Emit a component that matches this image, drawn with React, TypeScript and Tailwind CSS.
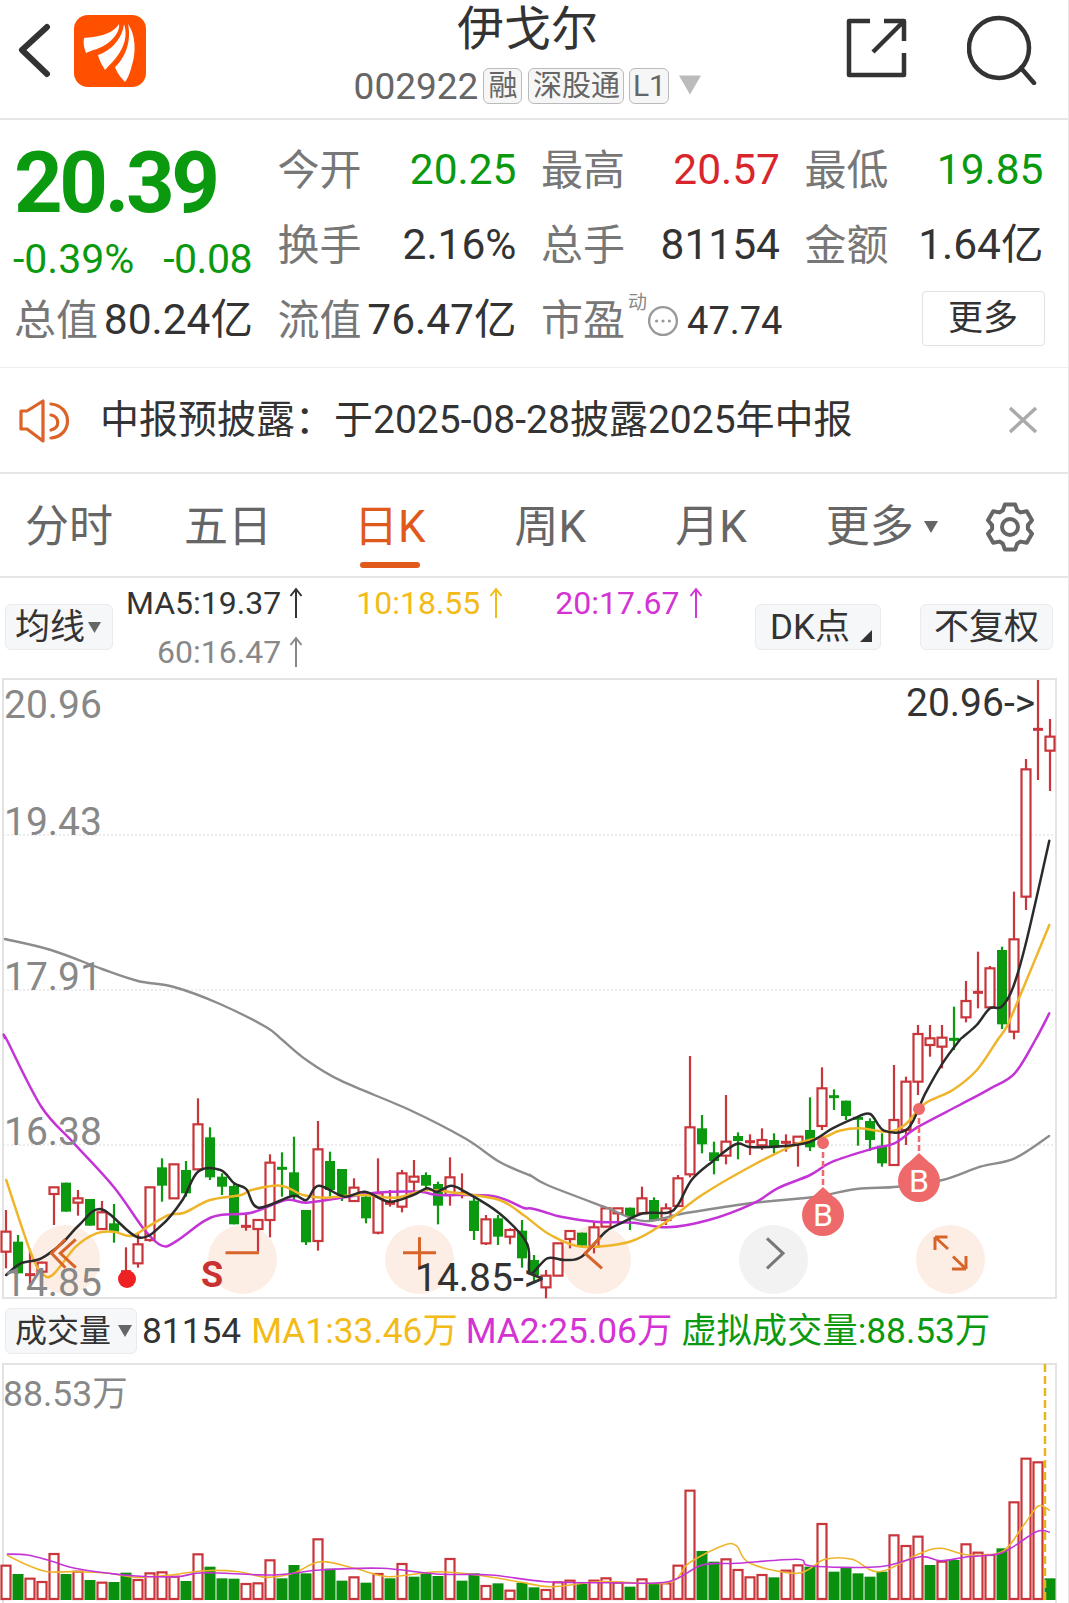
const RED = '#c9353a';
const GREEN = '#0a990f';

type Candle = [number, number, number, number, 'r' | 'g'];
type Pt = [number, number];

// candle values were read off crops of the chart, so each block has its own scale
const candlesA: Candle[] = [
  [510, 575, 635, 685, 'r'], [585, 605, 700, 700, 'g'], [630, 704, 704, 745, 'r'], [665, 668, 695, 700, 'r'],
  [442, 442, 462, 555, 'r'], [428, 428, 515, 515, 'g'], [450, 475, 488, 527, 'r'], [477, 477, 557, 557, 'g'],
  [483, 517, 567, 567, 'r'], [492, 550, 575, 608, 'g'], [622, 695, 695, 700, 'r'], [580, 613, 670, 683, 'r'],
  [442, 442, 600, 605, 'r'], [355, 382, 437, 485, 'g'], [373, 373, 475, 475, 'r'], [363, 390, 460, 470, 'g'],
  [175, 253, 388, 388, 'r'], [262, 292, 412, 420, 'g'], [400, 410, 440, 465, 'g'], [430, 438, 553, 553, 'g'],
  [520, 559, 559, 572, 'r'], [540, 540, 567, 635, 'r'], [343, 368, 540, 592, 'r'], [337, 385, 385, 470, 'g'],
  [290, 397, 470, 480, 'g'], [510, 510, 607, 615, 'g'], [243, 328, 603, 632, 'r'], [335, 363, 450, 470, 'g'],
  [387, 387, 470, 483, 'g'], [415, 443, 483, 483, 'r'], [455, 470, 535, 550, 'g'], [355, 460, 578, 583, 'r'],
  [450, 490, 490, 500, 'r'], [390, 400, 500, 517, 'r'], [360, 410, 425, 455, 'r'], [397, 405, 437, 445, 'g'],
  [425, 432, 497, 553, 'g'], [352, 412, 465, 497, 'r'], [400, 460, 460, 475, 'r'], [465, 482, 573, 600, 'g'],
  [525, 538, 610, 615, 'r'], [525, 535, 590, 615, 'g'], [565, 570, 590, 613, 'r'], [540, 572, 655, 683, 'g'],
  [645, 660, 705, 730, 'g'],
];

const candlesB: Candle[] = [
  [690, 707, 742, 775, 'r'], [610, 610, 707, 707, 'r'], [573, 573, 597, 625, 'r'], [578, 578, 617, 617, 'g'],
  [545, 562, 620, 640, 'r'], [505, 505, 560, 560, 'r'], [505, 505, 520, 555, 'r'], [503, 503, 530, 570, 'g'],
  [440, 475, 520, 520, 'r'], [472, 480, 543, 543, 'g'], [490, 505, 540, 555, 'r'], [405, 415, 498, 498, 'r'],
  [48, 262, 403, 412, 'r'], [225, 265, 313, 340, 'g'], [305, 337, 363, 403, 'g'], [165, 305, 347, 373, 'r'],
  [277, 288, 303, 358, 'g'], [283, 305, 305, 345, 'r'], [265, 300, 316, 330, 'r'], [280, 300, 320, 340, 'g'],
  [283, 307, 307, 335, 'r'], [290, 290, 310, 380, 'r'], [172, 270, 322, 333, 'g'], [82, 145, 258, 270, 'r'],
  [148, 170, 170, 210, 'g'], [182, 182, 228, 240, 'g'], [230, 235, 235, 317, 'g'], [235, 243, 300, 333, 'g'],
  [280, 317, 370, 380, 'g'], [75, 240, 375, 375, 'r'], [110, 125, 270, 315, 'r'], [-45, -18, 125, 165, 'r'],
];

const candlesC: Candle[] = [
  [1035, 1075, 1095, 1130, 'r'], [1035, 1073, 1100, 1165, 'r'], [980, 1078, 1078, 1110, 'g'], [903, 963, 1012, 1027, 'r'],
  [815, 937, 937, 985, 'r'], [858, 865, 982, 982, 'r'], [800, 810, 1033, 1047, 'g'], [635, 778, 1055, 1078, 'r'],
  [237, 268, 650, 690, 'r'], [0, 148, 148, 300, 'r'], [117, 170, 212, 333, 'r'],
];

const yA = (y: number) => 1040 + y / 3;
const yC = (y: number) => 680 + y / 3;
const xA = (x: number) => x / 2.904;
const xB = (x: number) => 530 + x / 2.909;
const xC = (x: number) => 800 + x / 3;

const candles: Candle[] = [
  ...candlesA.map((c): Candle => [yA(c[0]), yA(c[1]), yA(c[2]), yA(c[3]), c[4]]),
  ...candlesB.map((c): Candle => [yA(c[0]), yA(c[1]), yA(c[2]), yA(c[3]), c[4]]),
  ...candlesC.map((c): Candle => [yC(c[0]), yC(c[1]), yC(c[2]), yC(c[3]), c[4]]),
];

const join = (a: Pt[], b: Pt[], c: Pt[]): Pt[] => [
  ...a.map(([x, y]): Pt => [xA(x), yA(y)]),
  ...b.map(([x, y]): Pt => [xB(x), yA(y)]),
  ...c.map(([x, y]): Pt => [xC(x), yC(y)]),
];

// catmull-rom through the read points, the app's lines are curves
function smooth(pts: Pt[]) {
  let d = `M${pts[0][0]} ${pts[0][1]}`;
  for (let i = 0; i < pts.length - 1; i++) {
    const p0 = pts[Math.max(i - 1, 0)];
    const p1 = pts[i];
    const p2 = pts[i + 1];
    const p3 = pts[Math.min(i + 2, pts.length - 1)];
    const c1x = p1[0] + (p2[0] - p0[0]) / 6;
    const c1y = p1[1] + (p2[1] - p0[1]) / 6;
    const c2x = p2[0] - (p3[0] - p1[0]) / 6;
    const c2y = p2[1] - (p3[1] - p1[1]) / 6;
    d += `C${c1x.toFixed(1)} ${c1y.toFixed(1)} ${c2x.toFixed(1)} ${c2y.toFixed(1)} ${p2[0].toFixed(1)} ${p2[1].toFixed(1)}`;
  }
  return d;
}

const ma60 = smooth([
  [5, 939], [51, 950], [102, 969], [138, 981], [174, 987], [220, 1004], [266, 1027],
  ...join(
    [[820, 0], [890, 60], [990, 122], [1190, 210], [1350, 295], [1450, 365], [1535, 405]],
    [[0, 405], [50, 435], [215, 500], [330, 543], [450, 520], [640, 490], [830, 470], [950, 447], [1070, 440], [1200, 420], [1310, 380], [1410, 355], [1510, 288]],
    [],
  ),
]);

const ma20 = smooth([
  [5, 1038],
  ...join(
    [[20, 0], [120, 200], [215, 310], [330, 440], [420, 570], [470, 617], [510, 605], [590, 545], [640, 525], [730, 518], [830, 480], [890, 488], [1000, 472], [1090, 458], [1220, 455], [1270, 465], [1430, 468], [1520, 503]],
    [[0, 505], [40, 515], [90, 530], [190, 545], [300, 548], [400, 562], [520, 540], [650, 490], [720, 445], [815, 405], [880, 365], [1000, 325], [1060, 310], [1130, 260], [1250, 195], [1340, 145], [1410, 100], [1470, 0]],
    [[748, 1000]],
  ),
]);

const ma10 = smooth(
  join(
    [[18, 420], [90, 640], [125, 703], [155, 703], [220, 620], [280, 580], [330, 575], [380, 588], [430, 560], [490, 525], [535, 518], [610, 480], [700, 465], [730, 450], [815, 437], [880, 465], [940, 473], [1050, 465], [1150, 473], [1240, 450], [1330, 460], [1450, 480], [1520, 525]],
    [[0, 540], [60, 585], [150, 620], [290, 605], [390, 550], [500, 465], [650, 375], [780, 310], [860, 290], [900, 272], [960, 265], [1040, 275], [1090, 255], [1150, 190], [1230, 150], [1300, 90], [1360, 0]],
    [[620, 1040], [655, 960], [748, 735]],
  ),
);

const ma5 = smooth(
  join(
    [[18, 705], [60, 670], [120, 655], [180, 610], [230, 555], [295, 508], [400, 592], [470, 555], [530, 480], [575, 395], [640, 390], [680, 430], [715, 447], [750, 503], [850, 468], [890, 480], [925, 437], [1000, 470], [1060, 455], [1130, 485], [1200, 465], [1240, 445], [1270, 455], [1310, 437], [1350, 455], [1450, 520], [1530, 610]],
    [[0, 700], [50, 655], [100, 660], [150, 650], [220, 575], [260, 552], [330, 520], [400, 518], [430, 495], [470, 420], [530, 365], [600, 312], [650, 322], [800, 310], [880, 265], [950, 232], [990, 222], [1030, 272], [1100, 265], [1150, 160], [1200, 70], [1250, 0]],
    [[490, 1070], [530, 1035], [570, 985], [605, 980], [640, 920], [680, 780], [748, 482]],
  ),
);

// [top of bar in the crop, colour]
const volumes: [number, 'r' | 'g'][] = [
  [797, 'r'], [822, 'g'], [836, 'r'], [846, 'r'], [762, 'r'], [822, 'g'], [815, 'r'], [840, 'g'], [848, 'r'], [846, 'g'],
  [818, 'g'], [840, 'r'], [820, 'r'], [817, 'r'], [830, 'r'], [843, 'g'], [763, 'r'], [800, 'g'], [835, 'g'], [836, 'g'],
  [852, 'r'], [850, 'r'], [781, 'r'], [835, 'g'], [795, 'g'], [820, 'g'], [718, 'r'], [806, 'g'], [842, 'g'], [832, 'r'],
  [848, 'g'], [822, 'r'], [835, 'g'], [792, 'r'], [830, 'g'], [820, 'g'], [828, 'g'], [777, 'r'], [842, 'g'], [820, 'g'],
  [858, 'r'], [850, 'g'], [872, 'r'], [848, 'g'], [862, 'g'], [870, 'r'], [847, 'r'], [842, 'r'], [852, 'g'], [842, 'r'],
  [835, 'r'], [848, 'r'], [860, 'g'], [838, 'r'], [850, 'g'], [850, 'r'], [797, 'r'], [572, 'r'], [753, 'g'], [785, 'g'],
  [778, 'r'], [810, 'r'], [832, 'r'], [825, 'r'], [832, 'g'], [812, 'r'], [796, 'r'], [800, 'g'], [672, 'r'], [815, 'g'],
  [803, 'g'], [820, 'g'], [830, 'g'], [815, 'g'], [706, 'r'], [738, 'r'], [710, 'r'], [795, 'g'], [785, 'r'], [780, 'g'],
  [733, 'r'], [758, 'r'], [765, 'r'], [745, 'g'], [607, 'r'], [476, 'r'], [487, 'r'], [835, 'g'],
];

const volLine = (pts: Pt[]) => smooth(pts.map(([x, y]): Pt => [x / 1.4668, 1300 + y / 3]));

const volMa1 = volLine([[10, 765], [40, 795], [70, 815], [110, 815], [160, 820], [200, 832], [250, 825], [300, 812], [350, 815], [390, 832], [430, 820], [470, 785], [520, 805], [570, 830], [640, 815], [700, 825], [760, 845], [810, 860], [880, 845], [980, 848], [1010, 790], [1060, 737], [1080, 737], [1100, 790], [1170, 820], [1210, 778], [1250, 778], [1290, 815], [1350, 760], [1380, 745], [1420, 765], [1470, 755], [1500, 680], [1523, 618], [1540, 632]]);
const volMa2 = volLine([[10, 762], [40, 765], [70, 780], [110, 805], [160, 820], [200, 828], [260, 830], [300, 818], [400, 825], [470, 810], [560, 805], [640, 822], [720, 825], [800, 845], [900, 848], [980, 845], [1030, 795], [1080, 790], [1170, 778], [1190, 798], [1290, 800], [1350, 770], [1380, 782], [1420, 770], [1470, 758], [1520, 695], [1540, 697]]);

const gearPath = (() => {
  const cx = 25;
  const cy = 25;
  const p = (deg: number, r: number) => {
    const a = (deg * Math.PI) / 180;
    return `${(cx + r * Math.cos(a)).toFixed(1)} ${(cy + r * Math.sin(a)).toFixed(1)}`;
  };
  let d = '';
  for (let k = 0; k < 6; k++) {
    const a = k * 60 - 90;
    d += `${k === 0 ? 'M' : 'L'}${p(a - 24, 18)} L${p(a - 13, 23)} L${p(a + 13, 23)} L${p(a + 24, 18)} `;
  }
  return d + 'Z';
})();

function UpArrow({ className }: { className: string }) {
  return (
    <svg width="14" height="32" viewBox="0 0 14 32" fill="none" stroke="currentColor" strokeWidth="2" className={className}>
      <path d="M7 31V2M1.5 9L7 2l5.5 7" />
    </svg>
  );
}

function Caret({ className, color = '#666' }: { className: string; color?: string }) {
  return (
    <svg viewBox="0 0 14 14" className={className}>
      <path d="M0 1h14L7 13z" fill={color} />
    </svg>
  );
}

function Stat({ label, value, color = 'text-[#333]' }: { label: string; value: string; color?: string }) {
  return (
    <div className="flex items-center justify-between">
      <span className="text-[42px] leading-none text-[#777]">{label}</span>
      <span className={`text-[42.5px] leading-none ${color}`}>{value}</span>
    </div>
  );
}

function Header() {
  return (
    <header className="flex h-[120px] items-start border-b-2 border-[#e6e6e6]">
      <div className="flex w-[209px] items-center pt-[15px] pl-[18px]">
        <svg width="34" height="72" viewBox="18 15 34 72" fill="none" stroke="#333" strokeWidth="6" strokeLinecap="round" strokeLinejoin="round">
          <path d="M47 27L22 50l25 24" />
        </svg>
        <svg width="72" height="72" viewBox="0 0 72 72" className="ml-[22px]">
          <rect width="72" height="72" rx="14" fill="#ff5000" />
          <path d="M10 23C22 22 38 20 45 9c1 5-3 13-11 19-8 6-16 7-22 10-2-5-3-10-2-15z" fill="#fff" />
          <path d="M50 9c4 11 0 23-6 31-4 6-9 10-13 15-3-5-6-10-7-15 12-4 24-15 26-31z" fill="#fff" />
          <path d="M54 9c8 11 8 29 4 41-2 8-4 13-7 17-4-4-8-9-10-15 9-8 17-24 13-43z" fill="#fff" />
        </svg>
      </div>
      <div className="flex flex-1 flex-col items-center">
        <div className="mt-[4px] text-[47px] leading-[50px] text-[#333]">伊戈尔</div>
        <div className="mt-[12px] flex h-[40px] items-center text-[#666]">
          <span className="text-[37px] leading-none">002922</span>
          <span className="ml-[5px] flex h-[36px] w-[39px] items-center justify-center rounded-[6px] border border-[#bbb] bg-[#f6f6f6] text-[29px] leading-none">融</span>
          <span className="ml-[6px] flex h-[36px] w-[96px] items-center justify-center rounded-[6px] border border-[#bbb] bg-[#f6f6f6] text-[29px] leading-none">深股通</span>
          <span className="ml-[5px] flex h-[36px] w-[40px] items-center justify-center rounded-[6px] border border-[#bbb] bg-[#f6f6f6] text-[30px] leading-none">L1</span>
          <Caret className="mb-[2px] ml-[10px] h-[22px] w-[22px]" color="#bbb" />
        </div>
      </div>
      <div className="flex w-[222px] items-start pt-[15px]">
        <svg width="62" height="64" viewBox="845 18 62 64" fill="none" stroke="#333" strokeWidth="4.5" strokeLinejoin="round">
          <path d="M869 24h-21v54h55V56" />
          <path d="M872 55l31-31M883 24h20v20" />
        </svg>
        <svg width="70" height="70" viewBox="966 15 70 70" fill="none" stroke="#333" strokeWidth="4.5" strokeLinecap="round" className="ml-[59px]">
          <circle cx="998" cy="48" r="30" />
          <path d="M1020 68l13 15" />
        </svg>
      </div>
    </header>
  );
}

function Quote() {
  return (
    <section className="h-[248px] border-b border-[#eeeeee] pt-[13px] pl-[14px]">
      <div className="grid grid-cols-[239px_239px_239px_239px] grid-rows-[75px_75px_75px] gap-x-[24.5px]">
        <div className="row-span-2 flex flex-col text-[#0a990f]">
          <div className="mt-[10px] text-[85px] leading-[80px] font-bold tracking-[-3.4px]">20.39</div>
          <div className="mt-[14px] flex justify-between text-[41px] leading-[44px]">
            <span className="-ml-[1px]">-0.39%</span>
            <span className="mr-[1px] tracking-[-0.5px]">-0.08</span>
          </div>
        </div>
        <Stat label="今开" value="20.25" color="text-[#0a990f]" />
        <Stat label="最高" value="20.57" color="text-[#d9262c]" />
        <Stat label="最低" value="19.85" color="text-[#0a990f]" />
        <Stat label="换手" value="2.16%" />
        <Stat label="总手" value="81154" />
        <Stat label="金额" value="1.64亿" />
        <Stat label="总值" value="80.24亿" />
        <Stat label="流值" value="76.47亿" />
        <div className="flex items-center">
          <span className="shrink-0 text-[42px] leading-none whitespace-nowrap text-[#777]">市盈</span>
          <span className="mb-[36px] ml-[3px] shrink-0 text-[19px] leading-none text-[#888]">动</span>
          <svg width="32" height="32" viewBox="0 0 30 30" fill="none" className="shrink-0">
            <circle cx="15" cy="15" r="13" stroke="#999" strokeWidth="2.2" />
            <circle cx="9" cy="15" r="1.5" fill="#999" />
            <circle cx="15" cy="15" r="1.5" fill="#999" />
            <circle cx="21" cy="15" r="1.5" fill="#999" />
          </svg>
          <span className="ml-[8px] shrink-0 text-[38px] leading-none text-[#333]">47.74</span>
        </div>
        <div className="flex items-center justify-end">
          <button className="-mt-[5px] -mr-[1px] flex h-[55px] w-[123px] items-center justify-center rounded-[4px] border border-[#e2e2e2] text-[35px] leading-none text-[#333]">更多</button>
        </div>
      </div>
    </section>
  );
}

function Notice() {
  return (
    <section className="flex h-[106px] items-center border-b-2 border-[#e6e6e6] pl-[19px]">
      <svg width="50" height="46" viewBox="18 398 50 46" fill="none" stroke="#dc6328" strokeWidth="3.2" strokeLinejoin="round" strokeLinecap="round" className="mb-[-3px]">
        <path d="M42 400v40l-16-12h-6v-18h6z" />
        <path d="M50 403c22 2 22 32 0 34" />
        <path d="M50 414c9 2 9 13 0 15" />
      </svg>
      <span className="ml-[31px] flex-1 text-[39px] leading-none text-[#333]">中报预披露：于2025-08-28披露2025年中报</span>
      <svg width="32" height="28" viewBox="0 0 32 28" stroke="#aaa" strokeWidth="3.5" className="mr-[29px]">
        <path d="M3 2l26 24M29 2L3 26" />
      </svg>
    </section>
  );
}

function Tabs() {
  const tab = 'text-[44px] leading-none text-[#666]';
  return (
    <nav className="relative flex h-[104px] items-center border-b-2 border-[#e6e6e6] pt-[3px] pl-[25px]">
      <span className={tab}>分时</span>
      <span className={`${tab} ml-[71px]`}>五日</span>
      <span className="ml-[82px] text-[44px] leading-none text-[#e05a1c]">日K</span>
      <span className={`${tab} ml-[89px]`}>周K</span>
      <span className={`${tab} ml-[89px]`}>月K</span>
      <span className={`${tab} ml-[79px]`}>更多</span>
      <Caret className="ml-[10px] h-[14px] w-[14px]" />
      <svg width="50" height="50" viewBox="0 0 50 50" fill="none" stroke="#666" strokeWidth="4" strokeLinejoin="round" className="ml-[47px]">
        <path d={gearPath} />
        <circle cx="25" cy="25" r="8" />
      </svg>
      <div className="absolute top-[88px] left-[360px] h-[6px] w-[60px] rounded-full bg-[#e05a1c]" />
    </nav>
  );
}

function MaRow() {
  const btn = 'flex h-[46px] items-center rounded-[6px] border border-[#e9ebee] bg-[#f6f7f9] text-[35px] leading-none text-[#333]';
  return (
    <section className="relative flex h-[100px] items-start pl-[5px] text-[32px] leading-none">
      <button className={`${btn} mt-[26px] w-[108px] pl-[9px]`}>
        均线
        <Caret className="ml-[3px] h-[13px] w-[13px]" />
      </button>
      <div className="mt-[9px] ml-[13px] flex flex-col items-end text-[#333]">
        <div className="flex items-center">
          MA5:19.37
          <UpArrow className="ml-[8px]" />
        </div>
        <div className="mt-[17px] flex items-center text-[#888]">
          60:16.47
          <UpArrow className="ml-[8px]" />
        </div>
      </div>
      <div className="mt-[9px] ml-[53px] flex items-center text-[#f3bb17]">
        10:18.55
        <UpArrow className="ml-[9px]" />
      </div>
      <div className="mt-[9px] ml-[52px] flex items-center text-[#d333d3]">
        20:17.67
        <UpArrow className="ml-[10px]" />
      </div>
      <button className={`${btn} absolute top-[26px] left-[755px] w-[126px] pl-[14px]`}>
        DK点
        <svg width="12" height="12" viewBox="0 0 12 12" className="mt-[18px] ml-[10px]">
          <path d="M12 0v12H0z" fill="#333" />
        </svg>
      </button>
      <button className={`${btn} absolute top-[26px] left-[920px] w-[133px] justify-center`}>不复权</button>
    </section>
  );
}

function Marker({ cx, dotY, headY, tipY }: { cx: number; dotY: number; headY: number; tipY: number }) {
  return (
    <g>
      <circle cx={cx} cy={dotY} r="6" fill="#ee6a6a" />
      <line x1={cx} y1={dotY} x2={cx} y2={tipY} stroke="#ee6a6a" strokeWidth="2.5" strokeDasharray="6 3" />
      <path d={`M${cx} ${tipY}L${cx - 14} ${headY - 15}L${cx + 14} ${headY - 15}Z`} fill="#ee6a6a" />
      <circle cx={cx} cy={headY} r="21" fill="#ee6a6a" />
      <text x={cx} y={headY + 11} textAnchor="middle" fontSize="32" fill="#fff">B</text>
    </g>
  );
}

function CandleChart() {
  const label = 'absolute left-[4px] text-[39px] leading-none text-[#888]';
  const circles = [
    { cx: 65, bg: 'bg-[#fdeee5]' },
    { cx: 242, bg: 'bg-[#fdeee5]' },
    { cx: 419, bg: 'bg-[#fdeee5]' },
    { cx: 596, bg: 'bg-[#fdeee5]' },
    { cx: 773, bg: 'bg-[#f2f2f2]' },
    { cx: 950, bg: 'bg-[#fdeee5]' },
  ];
  const lineProps = { fill: 'none', strokeLinejoin: 'round' as const, strokeLinecap: 'round' as const };
  return (
    <section className="relative h-[621px]">
      <div className="absolute top-0 bottom-0 left-[2px] w-[1055px] border-2 border-[#e3e3e3]" />
      {circles.map((c) => (
        <div key={c.cx} className={`absolute top-[547px] h-[69px] w-[69px] rounded-full ${c.bg}`} style={{ left: c.cx - 34.5 }} />
      ))}
      <svg width="1069" height="621" viewBox="0 678 1069 621" className="absolute top-0 left-0">
        {[835, 990, 1145].map((y) => (
          <line key={y} x1="3" x2="1055" y1={y} y2={y} stroke="#e6e6e6" strokeWidth="1.5" strokeDasharray="2 2" />
        ))}
        {candles.map(([high, top, bot, low, dir], i) => {
          const x = 6 + 12 * i;
          const c = dir === 'r' ? RED : GREEN;
          const doji = bot - top < 1;
          return (
            <g key={i}>
              <line x1={x} x2={x} y1={Math.max(high, 680)} y2={low} stroke={c} strokeWidth="2.2" />
              {doji ? (
                <line x1={x - 5} x2={x + 5} y1={top} y2={top} stroke={c} strokeWidth="3" />
              ) : dir === 'r' ? (
                <rect x={x - 4.5} y={top} width="9" height={bot - top} fill="#fff" stroke={c} strokeWidth="2.2" />
              ) : (
                <rect x={x - 5} y={top} width="10" height={bot - top} fill={c} />
              )}
            </g>
          );
        })}
        <path d={ma60} {...lineProps} stroke="#8c8c8c" strokeWidth="2.4" />
        <path d={ma20} {...lineProps} stroke="#c433d6" strokeWidth="2.5" />
        <path d={ma10} {...lineProps} stroke="#efb52a" strokeWidth="2.5" />
        <path d={ma5} {...lineProps} stroke="#2b2b2b" strokeWidth="2.5" />

        <g fill="none" stroke="#d9642a" strokeWidth="3">
          <path d="M65.4 1239.3L51.6 1253.3 65.4 1267.7" />
          <path d="M75.8 1239.3L60.3 1253.3 75.8 1267.7" />
          <path d="M225.5 1252.7H259" />
          <path d="M403 1252.7H436M419.5 1237.3v31.7" />
          <path d="M600.5 1237.3L585 1253.3l17 15" />
          <path d="M935 1237h12.5M935 1237v13M935 1237l13 12M966 1269h-14M966 1269v-13M966 1269l-13-12.5" />
        </g>
        <path d="M767 1238.3l16 15-16 15" fill="none" stroke="#777" strokeWidth="3" />

        <circle cx="127" cy="1279" r="9" fill="#ee2222" />
        <text x="201" y="1287" fontSize="36" fontWeight="700" fill="#c83232">S</text>
        <Marker cx={823} dotY={1143} headY={1215} tipY={1187} />
        <Marker cx={919} dotY={1109} headY={1181} tipY={1153} />
      </svg>
      <span className={`${label} top-[8px]`}>20.96</span>
      <span className={`${label} top-[125px]`}>19.43</span>
      <span className={`${label} top-[280px]`}>17.91</span>
      <span className={`${label} top-[435px]`}>16.38</span>
      <span className={`${label} top-[586px]`}>14.85</span>
      <span className="absolute top-[6px] left-[906px] text-[39px] leading-none text-[#333]">20.96-&gt;</span>
      <span className="absolute top-[581px] left-[415px] text-[39px] leading-none text-[#333]">14.85-&gt;</span>
    </section>
  );
}

function VolumeHeader() {
  return (
    <section className="flex h-[64px] items-start pl-[5px] text-[35.3px] leading-none">
      <button className="mt-[9px] flex h-[46px] w-[132px] items-center rounded-[6px] border border-[#e9ebee] bg-[#f6f7f9] pl-[9px] text-[32px] whitespace-nowrap text-[#333]">
        成交量
        <Caret className="ml-[7px] h-[14px] w-[14px]" />
      </button>
      <span className="mt-[15px] ml-[5px] text-[#333]">81154</span>
      <span className="mt-[15px] ml-[10px] text-[#f3bb17]">MA1:33.46万</span>
      <span className="mt-[15px] ml-[8px] text-[#d333d3]">MA2:25.06万</span>
      <span className="mt-[15px] ml-[9px] text-[#0a990f]">虚拟成交量:88.53万</span>
    </section>
  );
}

function VolumeChart() {
  return (
    <section className="relative h-[240px]">
      <div className="absolute top-0 bottom-0 left-[2px] w-[1055px] border-x-2 border-t-2 border-[#e3e3e3]" />
      <svg width="1069" height="240" viewBox="0 1363 1069 240" className="absolute top-0 left-0">
        {volumes.map(([zy, dir], i) => {
          const x = 6 + 12 * i;
          const top = 1300 + zy / 3;
          return dir === 'r' ? (
            <rect key={i} x={x - 4.5} y={top} width="9" height={1599 - top} fill="#fff" stroke={RED} strokeWidth="2.2" />
          ) : (
            <rect key={i} x={x - 5.5} y={top} width="11" height={1600 - top} fill="#0a8f0f" />
          );
        })}
        <path d={volMa1} fill="none" stroke="#efb52a" strokeWidth="1.6" />
        <path d={volMa2} fill="none" stroke="#c433d6" strokeWidth="1.6" />
        <line x1="1045" x2="1045" y1="1364" y2="1600" stroke="#e6b520" strokeWidth="2.5" strokeDasharray="8 4" />
      </svg>
      <span className="absolute top-[14px] left-[3px] text-[35.5px] leading-none text-[#888]">88.53万</span>
    </section>
  );
}

export default function App() {
  return (
    <div className="h-[1603px] w-[1069px] overflow-hidden border-r border-[#e8e8e8] bg-white font-['Roboto','Noto_Sans_CJK_SC',sans-serif]">
      <Header />
      <Quote />
      <Notice />
      <Tabs />
      <MaRow />
      <CandleChart />
      <VolumeHeader />
      <VolumeChart />
    </div>
  );
}
